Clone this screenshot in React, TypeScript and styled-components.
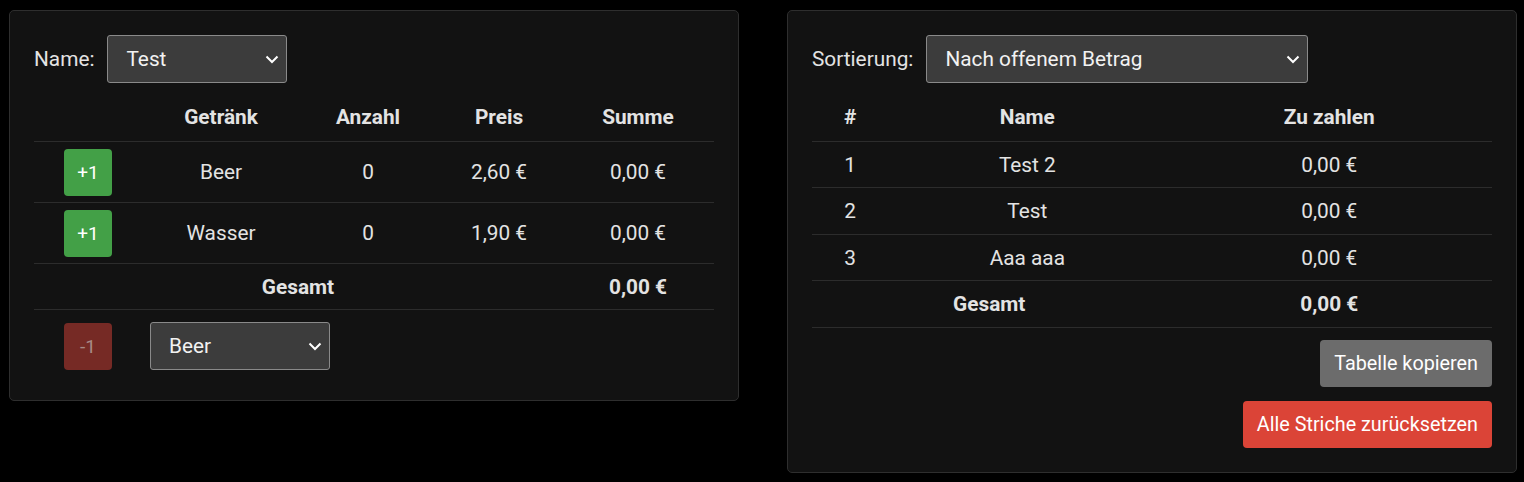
import React, { useState } from "react";
import styled, { createGlobalStyle } from "styled-components";

const GlobalStyle = createGlobalStyle`
  html, body {
    margin: 0;
    background: #000;
    font-family: Roboto, "Liberation Sans", sans-serif;
    color: #e3e3e3;
  }
`;

const Page = styled.div`
  display: flex;
  align-items: flex-start;
  gap: 48px;
  padding: 10px 0 0 9px;
`;

const Card = styled.div`
  width: 730px;
  box-sizing: border-box;
  background: #121212;
  border: 1px solid #2e2e2e;
  border-radius: 5px;
  padding: 24px;
`;

const FormRow = styled.div`
  display: flex;
  align-items: center;
  gap: 13px;
  margin-bottom: 10px;
  font-size: 20.8px;
`;

const Select = styled.select<{ $w: number }>`
  width: ${(p) => p.$w}px;
  height: 48px;
  box-sizing: border-box;
  background: #3c3c3c;
  color: #f2f2f2;
  border: 1px solid #8a8a8a;
  border-radius: 3px;
  font-family: Roboto, "Liberation Sans", sans-serif;
  font-size: 20.8px;
  padding: 0 12px 0 18px;
  appearance: none;
  background-image: url("data:image/svg+xml,%3Csvg xmlns='http://www.w3.org/2000/svg' width='14' height='9' viewBox='0 0 14 9'%3E%3Cpath d='M1.5 1.5 L7 7 L12.5 1.5' fill='none' stroke='%23ffffff' stroke-width='2'/%3E%3C/svg%3E");
  background-repeat: no-repeat;
  background-position: right 7px center;
`;

const Table = styled.table`
  width: 100%;
  border-collapse: collapse;
  table-layout: fixed;
  font-size: 20.8px;
`;

const Th = styled.th`
  height: 48px;
  padding: 0 8px;
  font-weight: 700;
  text-align: center;
  border-bottom: 1px solid #2c2c2c;
`;

const Td = styled.td<{ $h?: number; $bold?: boolean; $last?: boolean; $left?: boolean }>`
  height: ${(p) => p.$h || 46}px;
  padding: ${(p) => (p.$last ? "12px 8px 6px" : "0 8px")};
  text-align: ${(p) => (p.$left ? "left" : "center")};
  vertical-align: middle;
  font-weight: ${(p) => (p.$bold ? 700 : 400)};
  border-bottom: ${(p) => (p.$last ? "none" : "1px solid #2c2c2c")};
  box-sizing: border-box;
`;

const Btn = styled.button<{ $bg: string; $fg?: string }>`
  height: 47px;
  padding: 0 14px;
  border: none;
  border-radius: 4px;
  background: ${(p) => p.$bg};
  color: ${(p) => p.$fg || "#fff"};
  font-family: Roboto, "Liberation Sans", sans-serif;
  font-size: 19.8px;
  cursor: pointer;
`;

const CountBtn = styled(Btn)`
  width: 48px;
  padding: 0;
  display: block;
  margin: 0 auto;
  font-size: 19px;
`;

const Actions = styled.div`
  display: flex;
  flex-direction: column;
  align-items: flex-end;
  gap: 14px;
  margin-top: 12px;
`;

const drinks = [
  { name: "Beer", count: 0, price: "2,60 €", sum: "0,00 €" },
  { name: "Wasser", count: 0, price: "1,90 €", sum: "0,00 €" },
];

const people = [
  { nr: 1, name: "Test 2", due: "0,00 €", h: 46 },
  { nr: 2, name: "Test", due: "0,00 €", h: 47 },
  { nr: 3, name: "Aaa aaa", due: "0,00 €", h: 46 },
];

export default function App() {
  const [name, setName] = useState("Test");
  const [sort, setSort] = useState("open");
  const [drink, setDrink] = useState("Beer");

  return (
    <>
      <GlobalStyle />
      <Page>
        <Card>
          <FormRow>
            <span>Name:</span>
            <Select $w={180} value={name} onChange={(e) => setName(e.target.value)}>
              <option>Test</option>
              <option>Test 2</option>
              <option>Aaa aaa</option>
            </Select>
          </FormRow>
          <Table>
            <colgroup>
              <col style={{ width: 108 }} />
              <col style={{ width: 158 }} />
              <col style={{ width: 136 }} />
              <col style={{ width: 126 }} />
              <col style={{ width: 152 }} />
            </colgroup>
            <thead>
              <tr>
                <Th />
                <Th>Getränk</Th>
                <Th>Anzahl</Th>
                <Th>Preis</Th>
                <Th>Summe</Th>
              </tr>
            </thead>
            <tbody>
              {drinks.map((d) => (
                <tr key={d.name}>
                  <Td $h={61}>
                    <CountBtn $bg="#43a047">+1</CountBtn>
                  </Td>
                  <Td $h={61}>{d.name}</Td>
                  <Td $h={61}>{d.count}</Td>
                  <Td $h={61}>{d.price}</Td>
                  <Td $h={61}>{d.sum}</Td>
                </tr>
              ))}
              <tr>
                <Td $h={46} $bold colSpan={4}>
                  Gesamt
                </Td>
                <Td $h={46} $bold>
                  0,00 €
                </Td>
              </tr>
              <tr>
                <Td $last>
                  <CountBtn $bg="#762a25" $fg="#a88a86">
                    -1
                  </CountBtn>
                </Td>
                <Td $last $left colSpan={4}>
                  <Select $w={180} value={drink} onChange={(e) => setDrink(e.target.value)}>
                    <option>Beer</option>
                    <option>Wasser</option>
                  </Select>
                </Td>
              </tr>
            </tbody>
          </Table>
        </Card>

        <Card>
          <FormRow>
            <span>Sortierung:</span>
            <Select $w={382} value={sort} onChange={(e) => setSort(e.target.value)}>
              <option value="open">Nach offenem Betrag</option>
              <option value="name">Nach Name</option>
            </Select>
          </FormRow>
          <Table>
            <colgroup>
              <col style={{ width: 76 }} />
              <col style={{ width: 278 }} />
              <col style={{ width: 325 }} />
            </colgroup>
            <thead>
              <tr>
                <Th>#</Th>
                <Th>Name</Th>
                <Th>Zu zahlen</Th>
              </tr>
            </thead>
            <tbody>
              {people.map((p) => (
                <tr key={p.nr}>
                  <Td $h={p.h}>{p.nr}</Td>
                  <Td $h={p.h}>{p.name}</Td>
                  <Td $h={p.h}>{p.due}</Td>
                </tr>
              ))}
              <tr>
                <Td $h={47} $bold colSpan={2}>
                  Gesamt
                </Td>
                <Td $h={47} $bold>
                  0,00 €
                </Td>
              </tr>
            </tbody>
          </Table>
          <Actions>
            <Btn $bg="#6c6c6c">Tabelle kopieren</Btn>
            <Btn $bg="#db4437">Alle Striche zurücksetzen</Btn>
          </Actions>
        </Card>
      </Page>
    </>
  );
}
